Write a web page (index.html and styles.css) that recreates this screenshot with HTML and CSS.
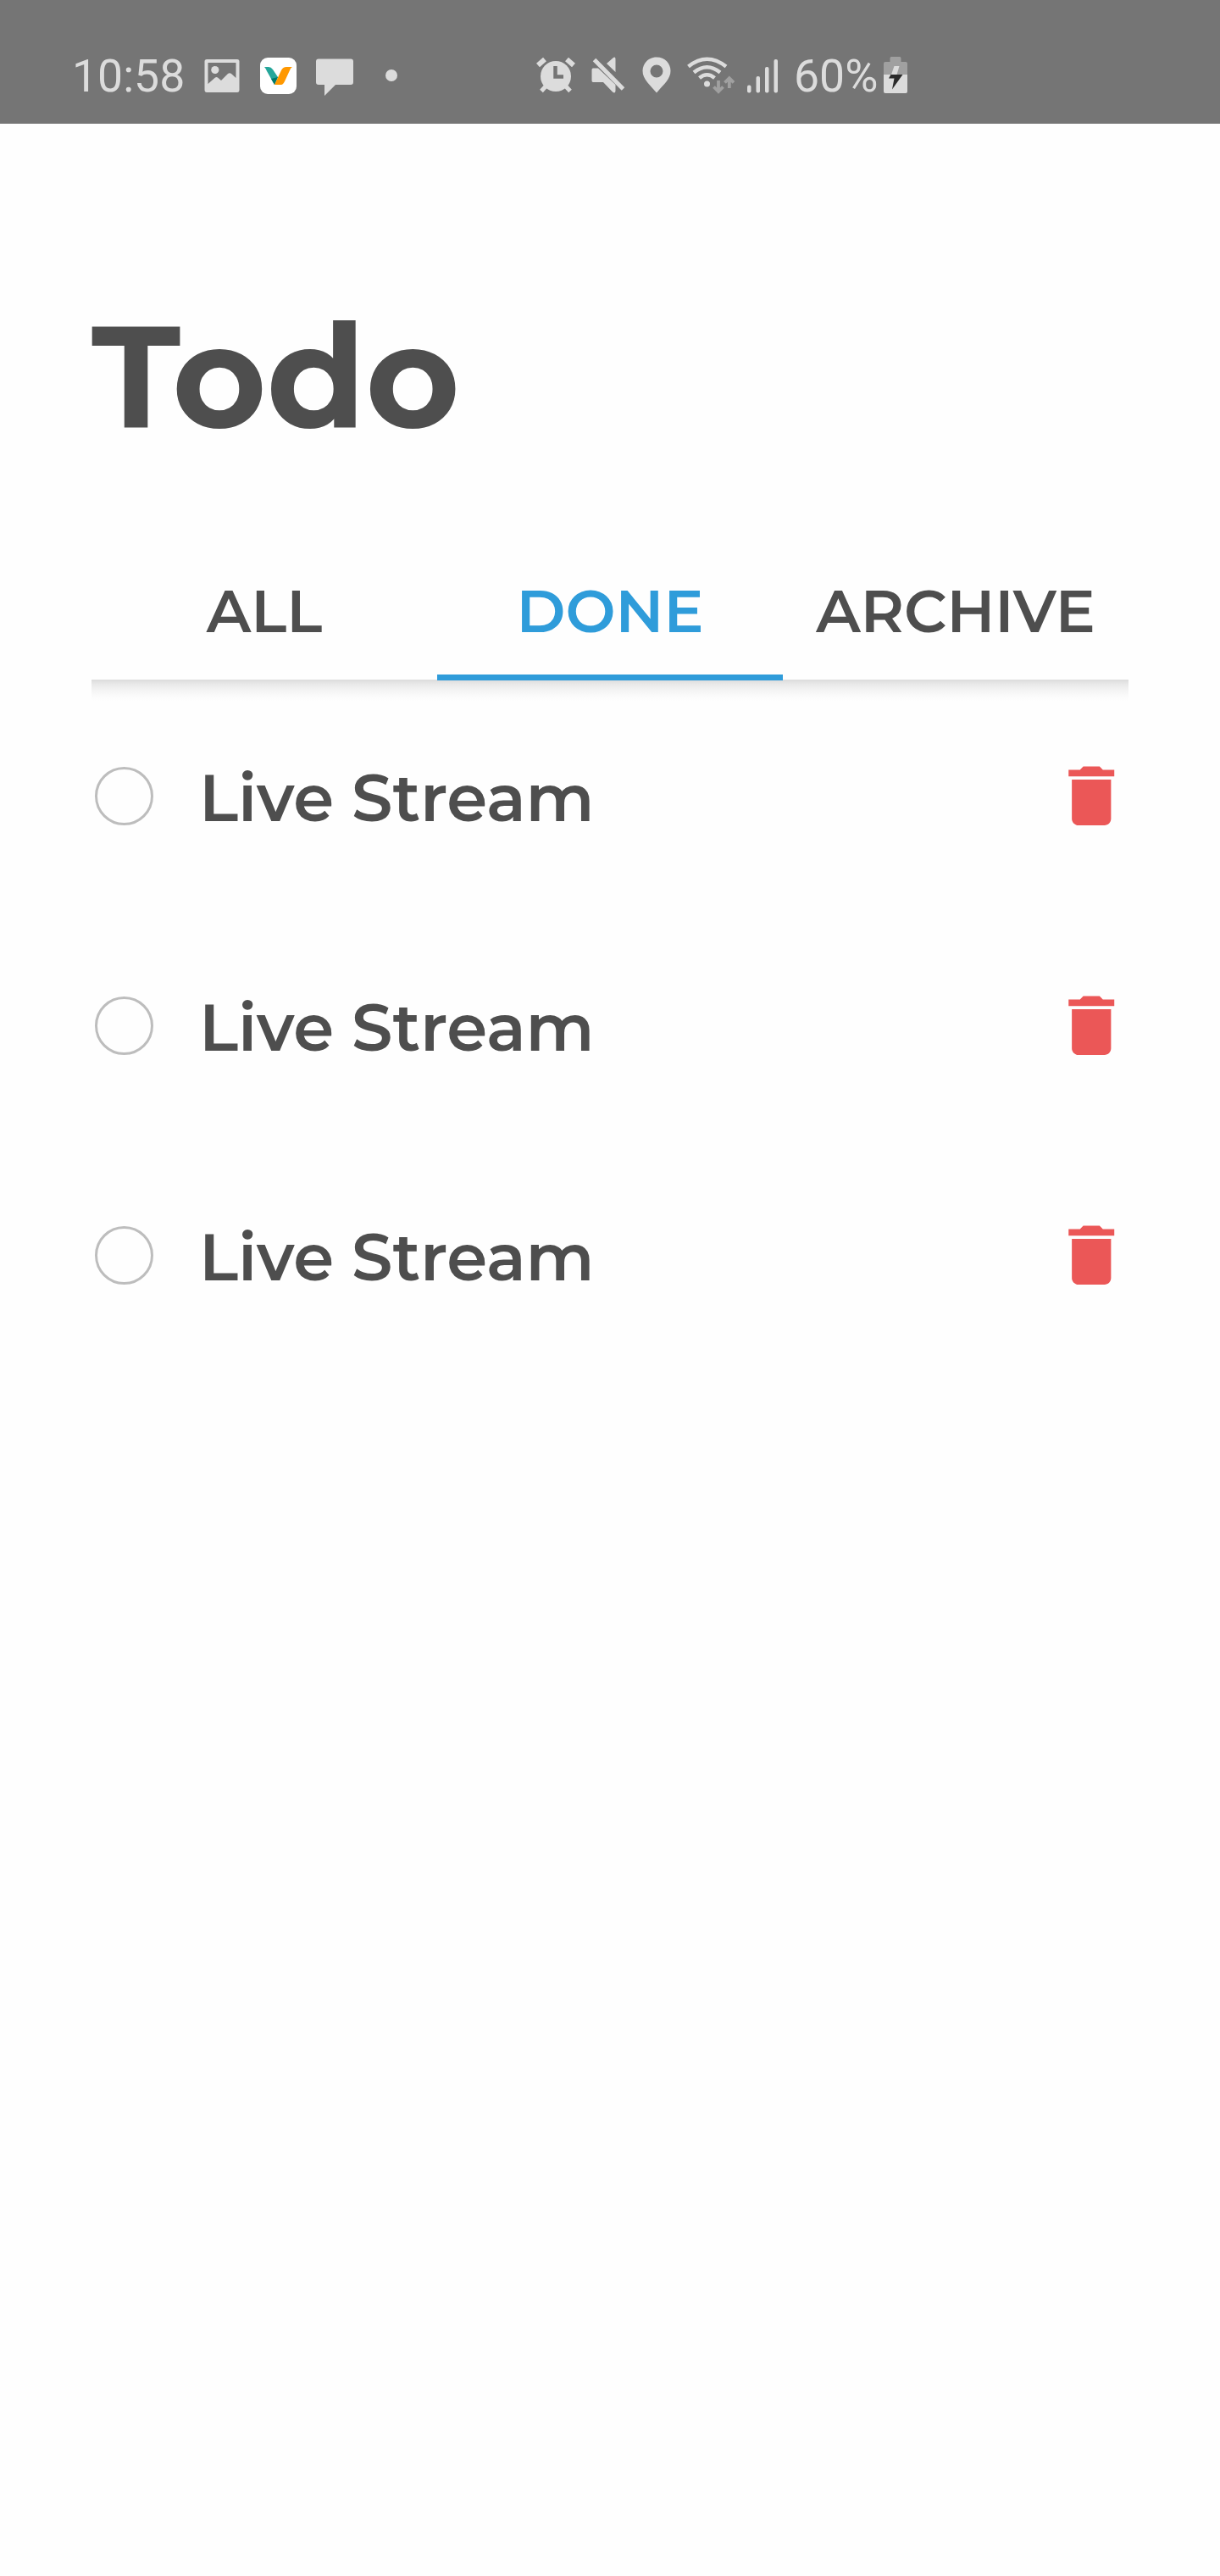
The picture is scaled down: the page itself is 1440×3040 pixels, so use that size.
FILE: index.html
```html
<!DOCTYPE html>
<html lang="en">
<head>
<meta charset="utf-8">
<title>Todo</title>
<link rel="stylesheet" href="styles.css">
</head>
<body>
<header class="status">
  <span class="clock">10:58</span>
  <div class="notifications">
    <svg width="42" height="44" viewBox="0 0 42 44"><path fill-rule="evenodd" d="M3 3H39Q41.500 3 41.500 5.500V39Q41.500 42 39 42H3Q.5 42 .5 39V5.500Q.5 3 3 3ZM4.500 7V32L13 24.500Q14.500 23.500 16 24.500L20 28L28 20Q30 18.500 32 20L37.500 25V7Z"/><circle cx="12.800" cy="15.500" r="4.600"/></svg>
    <svg width="43" height="44" viewBox="0 0 43 44"><rect y="1" width="43" height="43" rx="9" fill="#fff"/><path fill="#26a69a" d="M5 12H10Q13 12 15 15L21 24L17 33L8 17Q7 14 5 12Z"/><path fill="#00796b" d="M21 24L17 33L13 26Z"/><path fill="#ff9800" d="M38 12H31Q27 12 25 16L17 33H25Q27 33 29 29L35 16Q36 13 38 12Z"/></svg>
    <svg width="44" height="46" viewBox="0 0 44 46"><path d="M3 2.500H41Q44 2.500 44 5.500V30Q44 33 41 33H23L10 46V33H3Q0 33 0 30V5.500Q0 2.500 3 2.500Z"/></svg>
    <svg class="more" width="14" height="14" viewBox="0 0 14 14"><circle cx="7" cy="7" r="7"/></svg>
  </div>
  <div class="system">
    <svg width="46" height="44" viewBox="0 0 46 44"><circle cx="23" cy="23" r="18"/><path class="stroke" stroke-width="6" d="M2 10L10 3M36 3L44 10"/><path class="stroke" stroke-width="5" d="M11 35L6 40.500M35 35L40 40.500"/><path fill="none" stroke="#757575" stroke-width="4.500" d="M22.500 11V23.500H32"/></svg>
    <svg class="mute" width="40" height="44" viewBox="0 0 40 44"><path d="M28.500 3V18L18 8L26 1Q28.500-.5 28.500 3ZM2 13.500H8L28.500 33V40Q28.500 44 25 41.500L14 30H2Q.5 30 .5 28V15.500Q.5 13.500 2 13.500Z"/><path class="gap" stroke-width="4" d="M6 2L39 35"/><path class="stroke" stroke-width="5" d="M3.500 3.500L37.500 38"/></svg>
    <svg class="pin" width="34" height="44" viewBox="0 0 34 44"><path fill-rule="evenodd" d="M17 .5C7 .5.5 8 .5 16.500C.5 26 8 32 17 42.500C26 32 33.500 26 33.500 16.500C33.500 8 27 .5 17 .5ZM17 9.500A7.500 7.500 0 1 1 17 24.500A7.500 7.500 0 1 1 17 9.500Z"/></svg>
    <svg class="wifi" width="56" height="44" viewBox="0 0 56 44"><path class="stroke" stroke-width="4.500" d="M1.500 11.500Q23.500-6 46 11.500M8 18.500Q23.500 6 39 18.500M14.500 25Q23.500 17.500 32.500 25"/><circle cx="23.500" cy="32" r="3.500"/><path fill="none" stroke="#a0a0a0" stroke-width="3.800" d="M37 28V41M31.500 35.500L37 41L42.500 35.500M49.800 37V26M44.500 30.500L49.800 25.200L55 30.500"/></svg>
    <svg class="signal" width="37" height="44" viewBox="0 0 37 44"><rect y="33.500" width="4.500" height="9" rx="2"/><rect x="10.500" y="23" width="4.500" height="19.500" rx="2"/><rect x="21" y="12" width="4.500" height="30.500" rx="2"/><rect x="31.500" y="3" width="4.500" height="39.500" rx="2"/></svg>
    <span class="percent">60%</span>
    <svg class="battery" width="28" height="44" viewBox="0 0 28 44"><path fill="#a0a0a0" d="M9 0H19Q20.500 0 20.500 2V6H26Q28 6 28 8V21H0V8Q0 6 2 6H7.500V2Q7.500 0 9 0Z"/><path d="M0 21H28V41Q28 43 26 43H2Q0 43 0 41Z"/><path d="M12.500 11H18.500L15.500 21H9Z"/><path fill="#2b2b2b" d="M8.500 21H22.500L10 38.500L12.500 25.500H6Z"/></svg>
  </div>
</header>
<main class="app">
  <h1 class="title">Todo</h1>
  <nav class="tabs">
    <a class="tab">ALL</a>
    <a class="tab active">DONE</a>
    <a class="tab">ARCHIVE</a>
  </nav>
  <div class="shade"></div>
  <ul class="list">
    <li class="item"><span class="check"></span><span class="label">Live Stream</span><svg class="trash" viewBox="0 0 24 24"><path d="M6 19c0 1.100.9 2 2 2h8c1.100 0 2-.9 2-2V7H6v12zM19 4h-3.500l-1-1h-5l-1 1H5v2h14V4z"/></svg></li>
    <li class="item"><span class="check"></span><span class="label">Live Stream</span><svg class="trash" viewBox="0 0 24 24"><path d="M6 19c0 1.100.9 2 2 2h8c1.100 0 2-.9 2-2V7H6v12zM19 4h-3.500l-1-1h-5l-1 1H5v2h14V4z"/></svg></li>
    <li class="item"><span class="check"></span><span class="label">Live Stream</span><svg class="trash" viewBox="0 0 24 24"><path d="M6 19c0 1.100.9 2 2 2h8c1.100 0 2-.9 2-2V7H6v12zM19 4h-3.500l-1-1h-5l-1 1H5v2h14V4z"/></svg></li>
  </ul>
</main>
</body>
</html>
```
FILE: styles.css
```css
* { box-sizing: border-box; }
body {
  margin: 0;
  min-height: 3040px;
  background: #fefefe;
  color: #4e4e4e;
  font-family: Montserrat, Inter, sans-serif;
}
.status {
  display: flex;
  align-items: flex-start;
  height: 146px;
  padding: 67px 0 0 85px;
  background: #757575;
  color: #dcdcdc;
  fill: #dcdcdc;
}
.status svg { display: block; flex: none; }
.stroke { fill: none; stroke: #dcdcdc; }
.gap { fill: none; stroke: #757575; }
.clock {
  width: 156px;
  font: 400 53.500px/46px Roboto, sans-serif;
}
.notifications { display: flex; gap: 23.500px; width: 392px; }
.more { margin: 15px 0 0 14px; }
.system { display: flex; }
.mute { margin-left: 19px; }
.pin { margin-left: 20px; }
.wifi { margin-left: 19px; }
.signal { margin-left: 15px; }
.percent {
  width: 106px;
  margin-left: 18px;
  font: 400 53.500px/46px Roboto, sans-serif;
}
.app { padding: 198px 108px 0; }
.title {
  margin: 0;
  height: 200px;
  font-size: 170px;
  line-height: 200px;
  font-weight: 700;
  letter-spacing: -.4px;
}
.tabs {
  display: grid;
  grid-template-columns: repeat(3, 1fr);
  height: 156px;
  margin-top: 102px;
}
.tab {
  border-bottom: 7px solid transparent;
  font-size: 70.200px;
  font-weight: 600;
  line-height: 150px;
  text-align: center;
  white-space: nowrap;
}
.active { color: #2f9cda; border-color: #2f9cda; }
.shade {
  height: 25px;
  background: linear-gradient(#dbdbdb, #e8e8e8 20%, #f3f3f3 48%, #fafafa 75%, #fefefe);
}
.list { margin: -23px 0 0; padding: 0; list-style: none; }
.item { display: flex; align-items: center; height: 271px; }
.check {
  width: 69px;
  height: 69px;
  margin-left: 4px;
  border: 3px solid #bdbdbd;
  border-radius: 50%;
}
.label {
  margin-left: 54px;
  padding-top: 3px;
  font-size: 77px;
  font-weight: 600;
  line-height: 90px;
  letter-spacing: -.15px;
}
.trash { width: 92.500px; height: 92.500px; margin-left: auto; margin-right: -2px; fill: #eb5757; }
```
